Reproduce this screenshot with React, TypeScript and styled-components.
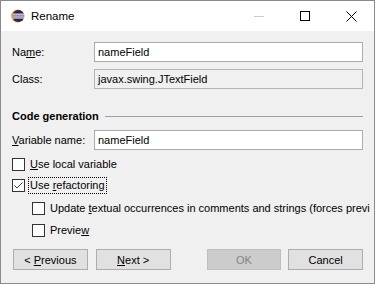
import styled, { createGlobalStyle } from "styled-components";

const GlobalStyle = createGlobalStyle`
  html, body {
    margin: 0;
    padding: 0;
    background: #ffffff;
  }
  * {
    box-sizing: border-box;
  }
`;

function EclipseIcon() {
  return (
    <svg width="14" height="14" viewBox="0 0 14 14">
      <circle cx="6.6" cy="7" r="6.4" fill="#f7941e" />
      <circle cx="7.4" cy="7" r="6" fill="#2c2255" />
      <rect x="1.6" y="4.6" width="11.6" height="1.1" fill="#ffffff" />
      <rect x="1.2" y="6.5" width="12.4" height="1.1" fill="#ffffff" />
      <rect x="1.6" y="8.4" width="11.6" height="1.1" fill="#ffffff" />
    </svg>
  );
}

function Check({ checked }: { checked?: boolean }) {
  return (
    <Box>
      {checked && (
        <svg width="11" height="11" viewBox="0 0 11 11">
          <path d="M1.5 5.5 L4 8 L9.5 2.5" stroke="#444444" strokeWidth="1" fill="none" />
        </svg>
      )}
    </Box>
  );
}

export default function App() {
  return (
    <>
      <GlobalStyle />
      <Window>
        <TitleBar>
          <EclipseIcon />
          <Title>Rename</Title>
          <Controls>
            <CtrlButton>
              <MinLine />
            </CtrlButton>
            <CtrlButton>
              <MaxBox />
            </CtrlButton>
            <CtrlButton>
              <svg width="11" height="11" viewBox="0 0 11 11">
                <path d="M0.5 0.5 L10.5 10.5 M10.5 0.5 L0.5 10.5" stroke="#000" strokeWidth="1" />
              </svg>
            </CtrlButton>
          </Controls>
        </TitleBar>
        <Body>
          <FieldRow $top={11}>
            <Label>
              Na<u>m</u>e:
            </Label>
            <Input>nameField</Input>
          </FieldRow>
          <FieldRow $top={7}>
            <Label>Class:</Label>
            <Input $readOnly>javax.swing.JTextField</Input>
          </FieldRow>
          <Heading>
            <HeadingText>Code generation</HeadingText>
            <Rule />
          </Heading>
          <FieldRow $top={6}>
            <Label>
              <u>V</u>ariable name:
            </Label>
            <Input>nameField</Input>
          </FieldRow>
          <CheckRow $top={8}>
            <Check />
            <CheckLabel>
              <u>U</u>se local variable
            </CheckLabel>
          </CheckRow>
          <CheckRow $top={8}>
            <Check checked />
            <CheckLabel $focused>
              Use <u>r</u>efactoring
            </CheckLabel>
          </CheckRow>
          <CheckRow $top={10} $indent={20}>
            <Check />
            <CheckLabel>
              Update <u>t</u>extual occurrences in comments and strings (forces previ
            </CheckLabel>
          </CheckRow>
          <CheckRow $top={9} $indent={20}>
            <Check />
            <CheckLabel>
              Previe<u>w</u>
            </CheckLabel>
          </CheckRow>
          <ButtonBar>
            <Button>
              &lt; <u>P</u>revious
            </Button>
            <Button $gap={8}>
              <u>N</u>ext &gt;
            </Button>
            <Button $gap={36} disabled>
              OK
            </Button>
            <Button $gap={7}>Cancel</Button>
          </ButtonBar>
        </Body>
      </Window>
    </>
  );
}

const Window = styled.div`
  width: 375px;
  height: 284px;
  border: 1px solid #8a8a8a;
  background: #f0f0f0;
  display: flex;
  flex-direction: column;
  overflow: hidden;
  font-family: "Liberation Sans", Arial, sans-serif;
  font-size: 11px;
  color: #000000;
`;

const TitleBar = styled.div`
  height: 30px;
  background: #ffffff;
  display: flex;
  align-items: center;
  padding-left: 10px;
  flex-shrink: 0;
`;

const Title = styled.span`
  margin-left: 6px;
  font-size: 11.5px;
`;

const Controls = styled.div`
  margin-left: auto;
  display: flex;
  height: 100%;
`;

const CtrlButton = styled.div`
  width: 46px;
  height: 100%;
  display: flex;
  align-items: center;
  justify-content: center;
`;

const MinLine = styled.div`
  width: 10px;
  height: 1px;
  background: #cccccc;
`;

const MaxBox = styled.div`
  width: 10px;
  height: 10px;
  border: 1px solid #000000;
`;

const Body = styled.div`
  flex: 1;
  padding: 0 11px 0 11px;
  display: flex;
  flex-direction: column;
`;

const FieldRow = styled.div<{ $top: number }>`
  display: grid;
  grid-template-columns: 82px 1fr;
  align-items: center;
  margin-top: ${(p) => p.$top}px;
`;

const Label = styled.span`
  white-space: nowrap;
`;

const Input = styled.div<{ $readOnly?: boolean }>`
  height: 20px;
  border: 1px solid ${(p) => (p.$readOnly ? "#b4b4b4" : "#ababab")};
  background: ${(p) => (p.$readOnly ? "#f0f0f0" : "#ffffff")};
  padding: 0 3px;
  display: flex;
  align-items: center;
`;

const Heading = styled.div`
  display: flex;
  align-items: center;
  height: 16px;
  margin-top: 19px;
`;

const HeadingText = styled.span`
  font-weight: bold;
  white-space: nowrap;
`;

const Rule = styled.div`
  flex: 1;
  height: 1px;
  background: #a0a0a0;
  margin-left: 6px;
`;

const CheckRow = styled.div<{ $top: number; $indent?: number }>`
  display: flex;
  align-items: center;
  height: 13px;
  margin-top: ${(p) => p.$top}px;
  margin-left: ${(p) => p.$indent ?? 0}px;
  white-space: nowrap;
`;

const Box = styled.div`
  width: 13px;
  height: 13px;
  border: 1px solid #333333;
  background: #ffffff;
  flex-shrink: 0;
  display: flex;
  align-items: center;
  justify-content: center;
`;

const CheckLabel = styled.span<{ $focused?: boolean }>`
  margin-left: 3px;
  padding: 1px 1px;
  border: 1px dotted ${(p) => (p.$focused ? "#000000" : "transparent")};
  line-height: 13px;
`;

const ButtonBar = styled.div`
  display: flex;
  margin-top: 12px;
  padding-left: 1px;
`;

const Button = styled.button<{ $gap?: number }>`
  width: 75px;
  height: 21px;
  margin-left: ${(p) => p.$gap ?? 0}px;
  border: 1px solid #adadad;
  background: #e1e1e1;
  font-family: "Liberation Sans", Arial, sans-serif;
  font-size: 11px;
  color: #000000;
  padding: 0;

  &:disabled {
    background: #cccccc;
    border-color: #bfbfbf;
    color: #838383;
  }
`;
